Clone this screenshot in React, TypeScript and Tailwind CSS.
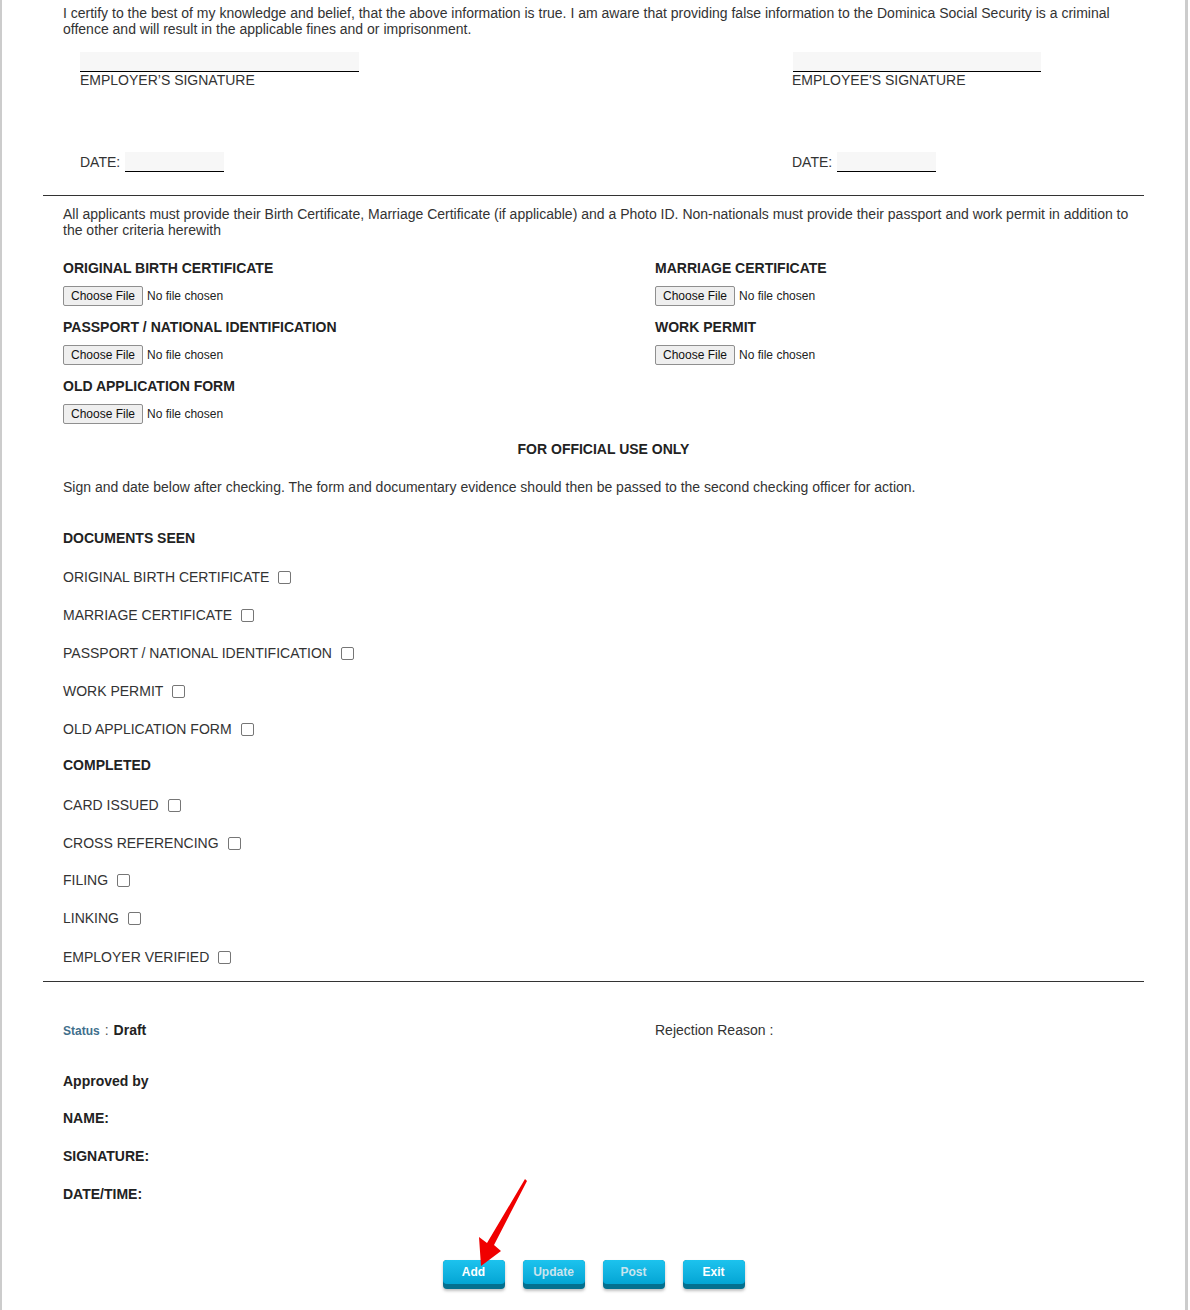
import React from "react";

const font = "font-['Liberation_Sans',Arial,Helvetica,sans-serif]";

function FileField({ label }: { label: string }) {
  return (
    <div>
      <div className="font-bold text-[14px] leading-[16px] text-[#222]">{label}</div>
      <div className="mt-[10px] flex items-center h-[20px]">
        <span className="inline-flex items-center h-[20px] px-[7px] border border-[#8f8f8f] rounded-[2px] bg-[#efefef] text-[12px] text-[#111] leading-none">
          Choose File
        </span>
        <span className="ml-[4px] text-[12px] text-[#222]">No file chosen</span>
      </div>
    </div>
  );
}

function CheckRow({ label, className = "" }: { label: string; className?: string }) {
  return (
    <div className={"flex items-center h-[16px] leading-[16px] text-[14px] text-[#333] " + className}>
      <span>{label}</span>
      <span className="ml-[9px] inline-block w-[13px] h-[13px] border border-[#767676] rounded-[2px] bg-white" />
    </div>
  );
}

function Btn({ label, dim }: { label: string; dim?: boolean }) {
  return (
    <div className="w-[62px] h-[29px] rounded-[4px] bg-[#04708f] shadow-[0_2px_3px_rgba(0,0,0,0.25)]">
      <div
        className={
          "h-[24px] rounded-[4px] bg-gradient-to-b from-[#1cc3ee] to-[#03a5d4] flex items-center justify-center text-[12px] font-bold " +
          (dim ? "text-[#c9e4ee]" : "text-white")
        }
      >
        {label}
      </div>
    </div>
  );
}

export default function App() {
  return (
    <div className={"relative w-[1190px] h-[1310px] overflow-hidden bg-white " + font}>
      <div className="w-[1188px] h-full border-l-2 border-r-[3px] border-[#cccccc]">
        <div className="ml-[41px] w-[1101px]">
          <p className="pl-[20px] pr-[8px] pt-[5px] text-[14px] leading-[16px] text-[#333]">
            I certify to the best of my knowledge and belief, that the above information is true. I am aware that providing false information to the Dominica Social Security is a criminal offence and will result in the applicable fines and or imprisonment.
          </p>

          <div className="mt-[15px] pl-[37px] grid grid-cols-[712px_1fr] text-[14px] leading-[16px] text-[#333]">
            <div>
              <div className="w-[279px] h-[20px] bg-[#f7f7f7] border-b border-black" />
              <div>EMPLOYER’S SIGNATURE</div>
              <div className="mt-[64px] flex items-center gap-[5px]">
                <span>DATE:</span>
                <span className="w-[99px] h-[20px] bg-[#f7f7f7] border-b border-black" />
              </div>
            </div>
            <div>
              <div className="ml-[1px] w-[248px] h-[20px] bg-[#f7f7f7] border-b border-black" />
              <div>EMPLOYEE'S SIGNATURE</div>
              <div className="mt-[64px] flex items-center gap-[5px]">
                <span>DATE:</span>
                <span className="w-[99px] h-[20px] bg-[#f7f7f7] border-b border-black" />
              </div>
            </div>
          </div>

          <div className="mt-[23px] border-t border-[#333]" />

          <p className="mt-[10px] pl-[20px] pr-[8px] text-[14px] leading-[16px] text-[#333]">
            All applicants must provide their Birth Certificate, Marriage Certificate (if applicable) and a Photo ID. Non-nationals must provide their passport and work permit in addition to the other criteria herewith
          </p>

          <div className="mt-[22px] pl-[20px] grid grid-cols-[592px_1fr] gap-y-[13px]">
            <FileField label="ORIGINAL BIRTH CERTIFICATE" />
            <FileField label="MARRIAGE CERTIFICATE" />
            <FileField label="PASSPORT / NATIONAL IDENTIFICATION" />
            <FileField label="WORK PERMIT" />
            <FileField label="OLD APPLICATION FORM" />
          </div>

          <div className="mt-[17px] pl-[20px] text-center font-bold text-[14px] leading-[16px] text-[#222]">
            FOR OFFICIAL USE ONLY
          </div>

          <div className="mt-[22px] pl-[20px] text-[14px] leading-[16px] text-[#333]">
            Sign and date below after checking. The form and documentary evidence should then be passed to the second checking officer for action.
          </div>

          <div className="pl-[20px]">
            <div className="mt-[35px] font-bold text-[14px] leading-[16px] text-[#222]">DOCUMENTS SEEN</div>
            <div className="mt-[23px] flex flex-col gap-[22px]">
              <CheckRow label="ORIGINAL BIRTH CERTIFICATE" />
              <CheckRow label="MARRIAGE CERTIFICATE" />
              <CheckRow label="PASSPORT / NATIONAL IDENTIFICATION" />
              <CheckRow label="WORK PERMIT" />
              <CheckRow label="OLD APPLICATION FORM" />
            </div>
            <div className="mt-[20px] font-bold text-[14px] leading-[16px] text-[#222]">COMPLETED</div>
            <div className="mt-[24px] flex flex-col gap-[22px]">
              <CheckRow label="CARD ISSUED" />
              <CheckRow label="CROSS REFERENCING" />
              <CheckRow label="FILING" className="-mt-[1px]" />
              <CheckRow label="LINKING" />
              <CheckRow label="EMPLOYER VERIFIED" className="mt-[1px]" />
            </div>
          </div>

          <div className="mt-[16px] border-t border-[#333]" />

          <div className="mt-[40px] pl-[20px] grid grid-cols-[592px_1fr] text-[14px] leading-[16px]">
            <div className="flex items-baseline">
              <span className="text-[12px] font-bold text-[#3f6f8c]">Status</span>
              <span className="text-[#555] mx-[5px]">:</span>
              <span className="font-bold text-[#222]">Draft</span>
            </div>
            <div className="text-[#333]">Rejection Reason :</div>
          </div>

          <div className="pl-[20px] font-bold text-[14px] leading-[16px] text-[#222]">
            <div className="mt-[34px]">Approved by</div>
            <div className="mt-[21px]">NAME:</div>
            <div className="mt-[22px]">SIGNATURE:</div>
            <div className="mt-[22px]">DATE/TIME:</div>
          </div>

          <div className="mt-[58px] flex justify-center gap-[18px]">
            <Btn label="Add" />
            <Btn label="Update" dim />
            <Btn label="Post" dim />
            <Btn label="Exit" />
          </div>
        </div>
      </div>

      <svg className="absolute left-0 top-0 pointer-events-none" width="1190" height="1310" viewBox="0 0 1190 1310">
        <polygon
          points="525,1179 527,1181 494,1245 501,1251 481,1266 479,1237 487,1243"
          fill="#f00000"
        />
      </svg>
    </div>
  );
}
